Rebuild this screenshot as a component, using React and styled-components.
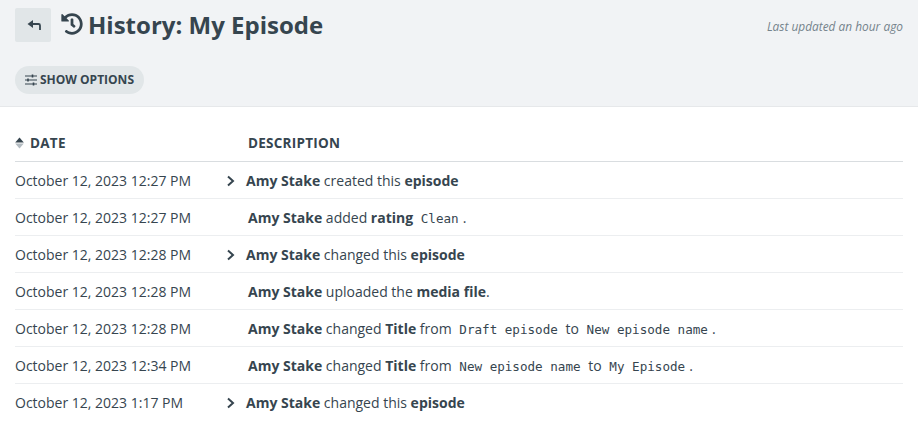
import React from "react";
import styled, { createGlobalStyle } from "styled-components";
import { FaHistory } from "react-icons/fa";

const GlobalStyle = createGlobalStyle`
  html, body { margin: 0; padding: 0; background: #fff; }
  body { font-family: "Open Sans", "Noto Sans", sans-serif; color: #36454f; }
`;

const Header = styled.header`
  height: 107px;
  box-sizing: border-box;
  background: #f1f3f5;
  border-bottom: 1px solid #e6e8ea;
  padding: 8px 15px 0;
`;

const TopRow = styled.div`
  display: flex;
  align-items: flex-start;
`;

const BackButton = styled.button`
  width: 36px;
  height: 34px;
  padding: 0 0 0 1px;
  border: 0;
  border-radius: 2px;
  background: #e1e6e8;
  display: flex;
  align-items: center;
  justify-content: center;
`;

const Title = styled.h1`
  margin: 0 0 0 10px;
  height: 32px;
  display: flex;
  align-items: center;
  gap: 5px;
  font-size: 24px;
  font-weight: 700;
  color: #36454f;
  white-space: nowrap;
`;

const Updated = styled.div`
  margin-left: auto;
  padding-top: 10px;
  font-size: 11.9px;
  font-style: italic;
  color: #75838c;
`;

const OptionsButton = styled.button`
  margin-top: 24px;
  height: 28px;
  width: 129px;
  padding: 0 0 1px;
  border: 0;
  border-radius: 14px;
  background: #e1e6e8;
  color: #36454f;
  font-family: inherit;
  font-size: 12px;
  font-weight: 700;
  display: flex;
  align-items: center;
  justify-content: center;
  gap: 3px;
  white-space: nowrap;
`;

const Table = styled.div`
  margin: 0 15px;
  padding-top: 18px;
`;

const Row = styled.div`
  display: grid;
  grid-template-columns: 233px 1fr;
  align-items: center;
  height: 37px;
  box-sizing: border-box;
  border-bottom: 1px solid ${(p) => (p.$head ? "#d9dde0" : "#eceef0")};
  font-size: 14px;
  white-space: nowrap;
  &:last-child { border-bottom: 0; }
`;

const HeadCell = styled.div`
  display: flex;
  align-items: center;
  gap: 6px;
  font-size: 13.5px;
  font-weight: 700;
  letter-spacing: 0.25px;
`;

const Desc = styled.div`
  position: relative;
  margin-left: ${(p) => (p.$expandable ? "-2px" : "0")};
`;

const Chevron = styled.span`
  position: absolute;
  left: -20px;
  top: 4px;
  display: flex;
`;

const Code = styled.code`
  font-family: "DejaVu Sans Mono", monospace;
  font-size: 12.6px;
  margin: 0 4px;
`;

const SortIcon = () => (
  <svg width="9" height="12" viewBox="0 0 9 12">
    <path d="M4.5.5 8.8 5.4H.2z" fill="#36454f" />
    <path d="M4.5 11.5 8.8 6.6H.2z" fill="#b4bcc2" />
  </svg>
);

const ChevronIcon = () => (
  <svg width="9" height="12" viewBox="0 0 9 12" fill="none" stroke="#36454f" strokeWidth="2">
    <path d="M2 1.5 7 6l-5 4.5" />
  </svg>
);

const rows = [
  ["October 12, 2023 12:27 PM", true, <><b>Amy Stake</b> created this <b>episode</b></>],
  ["October 12, 2023 12:27 PM", false, <><b>Amy Stake</b> added <b>rating</b> <Code>Clean</Code>.</>],
  ["October 12, 2023 12:28 PM", true, <><b>Amy Stake</b> changed this <b>episode</b></>],
  ["October 12, 2023 12:28 PM", false, <><b>Amy Stake</b> uploaded the <b>media file</b>.</>],
  ["October 12, 2023 12:28 PM", false, <><b>Amy Stake</b> changed <b>Title</b> from <Code>Draft episode</Code> to <Code>New episode name</Code>.</>],
  ["October 12, 2023 12:34 PM", false, <><b>Amy Stake</b> changed <b>Title</b> from <Code>New episode name</Code> to <Code>My Episode</Code>.</>],
  ["October 12, 2023 1:17 PM", true, <><b>Amy Stake</b> changed this <b>episode</b></>],
];

export default function App() {
  return (
    <>
      <GlobalStyle />
      <Header>
        <TopRow>
          <BackButton>
            <svg width="14" height="10" viewBox="0 0 14 10" fill="none" stroke="#36454f" strokeWidth="1.8">
              <path d="M6 0 .5 4 6 8z" fill="#36454f" stroke="none" />
              <path d="M4 4h7.5c.8 0 1.5.6 1.5 1.5V10" />
            </svg>
          </BackButton>
          <Title>
            <FaHistory size={22} color="#36454f" />
            History: My Episode
          </Title>
          <Updated>Last updated an hour ago</Updated>
        </TopRow>
        <OptionsButton>
          <svg width="12" height="12" viewBox="0 0 12 12" fill="none" stroke="#36454f" strokeWidth="1.2">
            <path d="M0 2h12M0 6h12M0 10h12" />
            <path d="M7.5.5v3M3 4.5v3M8.5 8.5v3" strokeWidth="1.6" />
          </svg>
          SHOW OPTIONS
        </OptionsButton>
      </Header>
      <Table>
        <Row $head>
          <HeadCell><SortIcon />DATE</HeadCell>
          <HeadCell>DESCRIPTION</HeadCell>
        </Row>
        {rows.map(([date, expandable, desc], i) => (
          <Row key={i}>
            <div>{date}</div>
            <Desc $expandable={expandable}>
              {expandable && <Chevron><ChevronIcon /></Chevron>}
              {desc}
            </Desc>
          </Row>
        ))}
      </Table>
    </>
  );
}
